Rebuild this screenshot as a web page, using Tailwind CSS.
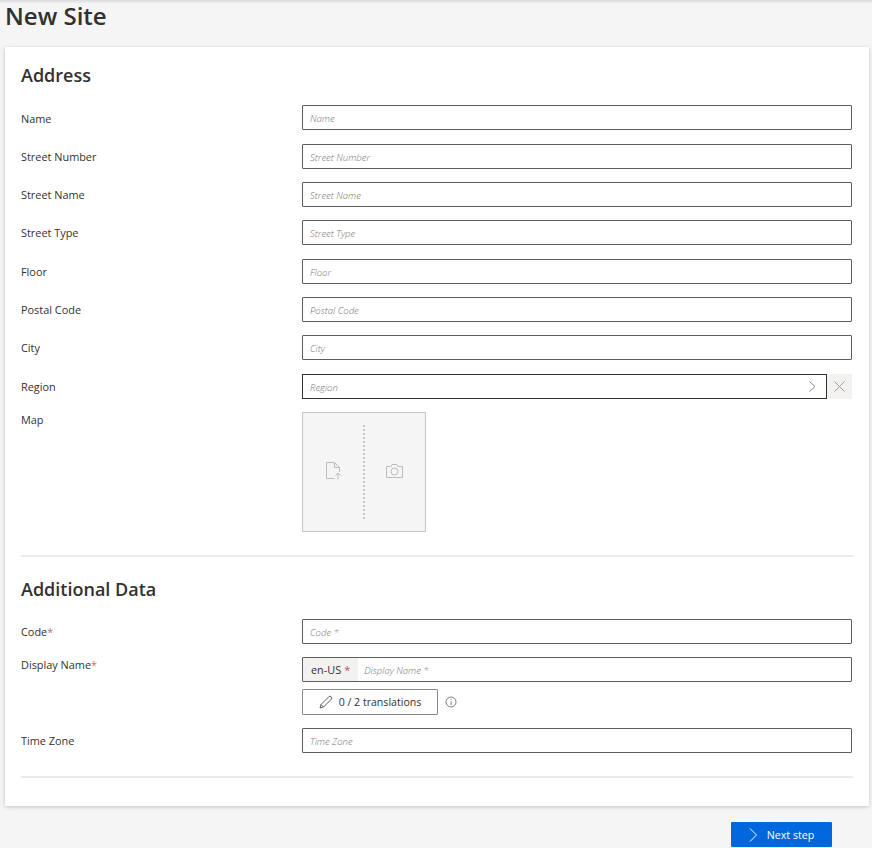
<!doctype html>
<html lang="en">
<head>
<meta charset="UTF-8" />
<title>New Site</title>
<script src="https://cdn.jsdelivr.net/npm/@tailwindcss/browser@4"></script>
</head>
<body class="bg-[#f5f5f5] text-[#323130] font-['Open_Sans',sans-serif] h-[848px] overflow-hidden">
  <div class="h-[4px] bg-linear-to-b from-[#dcdcdc] to-[#f5f5f5]"></div>
  <h1 class="pl-[5px] h-[43px] text-[24px] leading-[24px] font-semibold">New Site</h1>

  <main class="ml-[5px] w-[864px] h-[759px] bg-white shadow-[0_1px_4px_rgba(0,0,0,0.2)] pt-[16px] px-[16px]">
    <h2 class="text-[18px] leading-[24px] font-semibold mb-[18.4px]">Address</h2>

    <div class="flex flex-col gap-[13.33px]">
      <div class="flex items-center h-[25px]">
        <label class="w-[281px] text-[10.9px] pt-[1.6px]">Name</label>
        <div class="w-[550px] h-[25px] border border-[#605e5c] rounded-[1px] pl-[7px] pt-[3.4px] flex items-center text-[9.5px] font-light italic text-[#767472]">Name</div>
      </div>
      <div class="flex items-center h-[25px]">
        <label class="w-[281px] text-[10.9px] pt-[1.6px]">Street Number</label>
        <div class="w-[550px] h-[25px] border border-[#605e5c] rounded-[1px] pl-[7px] pt-[3.4px] flex items-center text-[9.5px] font-light italic text-[#767472]">Street Number</div>
      </div>
      <div class="flex items-center h-[25px]">
        <label class="w-[281px] text-[10.9px] pt-[1.6px]">Street Name</label>
        <div class="w-[550px] h-[25px] border border-[#605e5c] rounded-[1px] pl-[7px] pt-[3.4px] flex items-center text-[9.5px] font-light italic text-[#767472]">Street Name</div>
      </div>
      <div class="flex items-center h-[25px]">
        <label class="w-[281px] text-[10.9px] pt-[1.6px]">Street Type</label>
        <div class="w-[550px] h-[25px] border border-[#605e5c] rounded-[1px] pl-[7px] pt-[3.4px] flex items-center text-[9.5px] font-light italic text-[#767472]">Street Type</div>
      </div>
      <div class="flex items-center h-[25px]">
        <label class="w-[281px] text-[10.9px] pt-[1.6px]">Floor</label>
        <div class="w-[550px] h-[25px] border border-[#605e5c] rounded-[1px] pl-[7px] pt-[3.4px] flex items-center text-[9.5px] font-light italic text-[#767472]">Floor</div>
      </div>
      <div class="flex items-center h-[25px]">
        <label class="w-[281px] text-[10.9px] pt-[1.6px]">Postal Code</label>
        <div class="w-[550px] h-[25px] border border-[#605e5c] rounded-[1px] pl-[7px] pt-[3.4px] flex items-center text-[9.5px] font-light italic text-[#767472]">Postal Code</div>
      </div>
      <div class="flex items-center h-[25px]">
        <label class="w-[281px] text-[10.9px] pt-[1.6px]">City</label>
        <div class="w-[550px] h-[25px] border border-[#605e5c] rounded-[1px] pl-[7px] pt-[3.4px] flex items-center text-[9.5px] font-light italic text-[#767472]">City</div>
      </div>
      <div class="flex items-center h-[25px]">
        <label class="w-[281px] text-[10.9px] pt-[1.6px]">Region</label>
        <div class="w-[525px] h-[25px] border border-[#323130] pl-[7px] pr-[9px] flex items-center justify-between text-[9.5px] font-light italic text-[#767472]">
          <span class="pt-[3px]">Region</span>
          <svg class="w-[9px] h-[11px]" viewBox="0 0 9 11" fill="none" stroke="#7a7876" stroke-width="0.9"><path d="M1.5 0.5 7 5.5 1.5 10.5" /></svg>
        </div>
        <div class="w-[25px] h-[25px] bg-[#f3f2f1] flex items-center justify-center">
          <svg class="w-[11px] h-[11px]" viewBox="0 0 11 11" fill="none" stroke="#a19f9d" stroke-width="1"><path d="M0.5 0.5 10.5 10.5M10.5 0.5 0.5 10.5" /></svg>
        </div>
      </div>
    </div>

    <div class="flex mt-[13px]">
      <label class="w-[281px] text-[10.9px] leading-[16px]">Map</label>
      <div class="relative w-[124px] h-[120px] bg-[#f5f5f5] border border-[#c8c6c4] flex items-center">
        <div class="w-1/2 flex justify-center pb-[2px]">
          <svg class="w-[17px] h-[18px]" viewBox="0 0 17 18" fill="none" stroke="#bdbbb9" stroke-width="1"><path d="M9.5 16.5H1.5V0.5H9.5L14.5 5.5V10M9.5 0.5V5.5H14.5M13 17.5V11M10.5 13.5 13 11 15.5 13.5" /></svg>
        </div>
        <div class="absolute left-[60px] top-[12px] h-[94px] border-l-2 border-dotted border-[#c8c6c4]"></div>
        <div class="w-1/2 flex justify-center pb-[2px]">
          <svg class="w-[17px] h-[14px]" viewBox="0 0 17 14" fill="none" stroke="#bdbbb9" stroke-width="1"><path d="M0.5 2.5H5L6 0.5H11L12 2.5H16.5V13.5H0.5Z" /><circle cx="8.5" cy="7.5" r="3.5" /></svg>
        </div>
      </div>
    </div>

    <div class="mt-[23.3px] h-[2px] bg-[#edebe9] w-[832px]"></div>

    <h2 class="mt-[20px] text-[18px] leading-[24px] font-semibold mb-[18px]">Additional Data</h2>

    <div class="flex items-center h-[25px] mb-[13px]">
      <label class="w-[281px] text-[10.9px] pt-[1px]">Code<span class="text-[#a4262c]/70">*</span></label>
      <div class="w-[550px] h-[25px] border border-[#605e5c] rounded-[1px] pl-[7px] pt-[3px] flex items-center text-[9.5px] font-light italic text-[#767472]">Code *</div>
    </div>

    <div class="flex">
      <label class="w-[281px] text-[10.9px] leading-[16px]">Display Name<span class="text-[#a4262c]/70">*</span></label>
      <div>
        <div class="w-[550px] h-[25px] border border-[#605e5c] rounded-[1px] flex items-center">
          <span class="h-full bg-[#f3f2f1] px-[8px] pt-[2px] flex items-center text-[10.9px]">en-US<span class="ml-[3px] text-[#a4262c]/80">*</span></span>
          <span class="pl-[6px] pt-[4px] text-[9.5px] font-light italic text-[#767472]">Display Name *</span>
        </div>
        <div class="flex items-center mt-[7px]">
          <button class="w-[136px] h-[26px] border border-[#8a8886] rounded-[1px] pt-[1px] flex items-center justify-center gap-[6px] text-[10.6px]">
            <svg class="w-[14px] h-[14px]" viewBox="0 0 14 14" fill="none" stroke="#605e5c" stroke-width="1"><path d="M1 13 2 9.5 10 1.5Q11 0.7 12.2 1.8 13.3 3 12.5 4L4.5 12Z M2 9.5 4.5 12" /></svg>
            0 / 2 translations
          </button>
          <svg class="ml-[7px] w-[12px] h-[12px]" viewBox="0 0 12 12" fill="none" stroke="#605e5c" stroke-width="0.8"><circle cx="6" cy="6" r="5" /><path d="M6 5.3V9M6 3.2V4.2" /></svg>
        </div>
      </div>
    </div>

    <div class="flex items-center h-[25px] mt-[13px]">
      <label class="w-[281px] text-[10.9px] pt-[2px]">Time Zone</label>
      <div class="w-[550px] h-[25px] border border-[#605e5c] rounded-[1px] pl-[7px] pt-[3px] flex items-center text-[9.5px] font-light italic text-[#767472]">Time Zone</div>
    </div>

    <div class="mt-[23px] h-[2px] bg-[#edebe9] w-[832px]"></div>
  </main>

  <div class="flex justify-end pr-[40px] mt-[16px]">
    <button class="w-[101px] h-[25px] bg-[#0067dc] rounded-[1px] text-white text-[10.7px] pt-[1px] flex items-center justify-center gap-[9px]">
      <svg class="w-[9px] h-[14px]" viewBox="0 0 9 14" fill="none" stroke="white" stroke-width="1"><path d="M1 0.5 7.5 7 1 13.5" /></svg>
      Next step
    </button>
  </div>
</body>
</html>
